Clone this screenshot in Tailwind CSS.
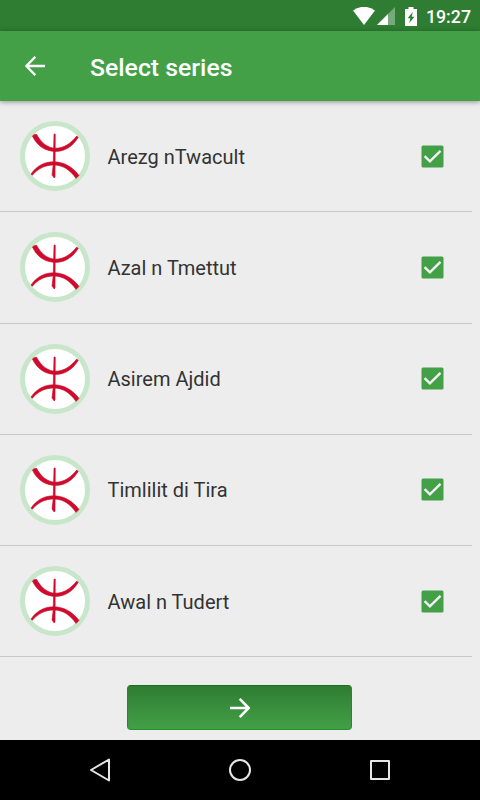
<!DOCTYPE html>
<html lang="en">
<head>
    <meta charset="UTF-8">
    <meta name="viewport" content="width=device-width, initial-scale=1.0">
    <title>Select series</title>

    <!-- Tailwind CSS via CDN -->
    <script src="https://cdn.jsdelivr.net/npm/@tailwindcss/browser@4"></script>
</head>
<body class="w-[480px] h-[800px] flex flex-col overflow-hidden bg-[#ededed] font-[Roboto,sans-serif]">

    <!-- Shared icons -->
    <svg class="hidden">
        <symbol id="emblem" viewBox="0 0 70 70">
            <circle cx="35" cy="35" r="32.5" fill="#fff" stroke="#c8e6c9" stroke-width="5"/>
            <g fill="#cf0a2c" stroke="#cf0a2c" stroke-width=".6" stroke-linejoin="round">
                <path d="M12.4 15Q14 13 16.6 13.3C21 21.8 28 27.2 35.5 27.2C44 27.2 50.5 22.5 56.8 15L58.2 16.4C53 25 45 30.4 36 30.4C25.5 30.4 17 25 12.4 15Z"/>
                <path d="M11 53C17 44.6 24.5 40.8 33.5 40.8C44 40.8 52.5 46 59 54.4L56 57.4C50 48.8 43 44 33.5 44C25.5 44 18 47.5 12.4 54.2Z"/>
                <path d="M34 13.2Q34.7 12.6 35.3 13.2L35 56L34.2 57L32 54L33.2 44Z"/>
            </g>
        </symbol>
        <symbol id="check" viewBox="0 0 23 23">
            <rect x=".5" y=".5" width="22" height="22" rx="1.5" fill="#43a047"/>
            <path d="M3.6 11.2L8.9 16.4L19.5 5.8" fill="none" stroke="#f2f2f2" stroke-width="2.4"/>
        </symbol>
    </svg>

    <!-- Status bar -->
    <div class="h-[31px] shrink-0 flex items-center justify-end bg-[#2e7d32] pr-[10px] pt-px text-white">
        <svg class="w-[22px] h-[18px]" viewBox="0 0 22 18"><path d="M0 3.5Q11-4 22 3.5L11 18Z" fill="#fff"/></svg>
        <svg class="w-[18px] h-[18px] ml-[2px]" viewBox="0 0 18 18">
            <path d="M18 0V18H0Z" fill="#fff" fill-opacity=".35"/>
            <path d="M11 7V18H0Z" fill="#fff"/>
        </svg>
        <svg class="w-3 h-[19px] ml-[10px]" viewBox="0 0 12 19">
            <path d="M3.5 0H8.5V2H12V19H0V2H3.5Z" fill="#fff"/>
            <path d="M7.8 5L2.6 11.3H5.3L4.3 16L9.5 9.7H6.7Z" fill="#2e7d32"/>
        </svg>
        <span class="ml-[9px] -mr-px text-[17.8px] leading-[31px] font-medium">19:27</span>
    </div>

    <!-- App bar -->
    <header class="h-[70px] shrink-0 flex items-center bg-[#43a047] pl-[25px] text-white shadow-[0_1px_5px_rgba(0,0,0,0.4)] z-10">
        <svg class="w-5 h-5" viewBox="0 0 20 20" fill="none" stroke="#fff" stroke-width="2.3"><path d="M20 10H2M10.3 .9L1.3 10L10.3 19.1"/></svg>
        <h1 class="ml-[45px] pt-[5px] text-[24.8px] leading-none font-medium">Select series</h1>
    </header>

    <!-- Series list -->
    <ul class="mr-[8px] text-[20px] text-[#333]">
        <li class="h-[111.25px] flex items-center border-b border-[#c8c8c8] pl-5 pr-7">
            <svg class="w-[70px] h-[70px]"><use href="#emblem"/></svg>
            <span class="ml-[17.5px] pt-px grow">Arezg nTwacult</span>
            <svg class="w-[23px] h-[23px]"><use href="#check"/></svg>
        </li>
        <li class="h-[111.25px] flex items-center border-b border-[#c8c8c8] pl-5 pr-7">
            <svg class="w-[70px] h-[70px]"><use href="#emblem"/></svg>
            <span class="ml-[17.5px] pt-px grow">Azal n Tmettut</span>
            <svg class="w-[23px] h-[23px]"><use href="#check"/></svg>
        </li>
        <li class="h-[111.25px] flex items-center border-b border-[#c8c8c8] pl-5 pr-7">
            <svg class="w-[70px] h-[70px]"><use href="#emblem"/></svg>
            <span class="ml-[17.5px] pt-px grow">Asirem Ajdid</span>
            <svg class="w-[23px] h-[23px]"><use href="#check"/></svg>
        </li>
        <li class="h-[111.25px] flex items-center border-b border-[#c8c8c8] pl-5 pr-7">
            <svg class="w-[70px] h-[70px]"><use href="#emblem"/></svg>
            <span class="ml-[17.5px] pt-px grow">Timlilit di Tira</span>
            <svg class="w-[23px] h-[23px]"><use href="#check"/></svg>
        </li>
        <li class="h-[111.25px] flex items-center border-b border-[#c8c8c8] pl-5 pr-7">
            <svg class="w-[70px] h-[70px]"><use href="#emblem"/></svg>
            <span class="ml-[17.5px] pt-px grow">Awal n Tudert</span>
            <svg class="w-[23px] h-[23px]"><use href="#check"/></svg>
        </li>
    </ul>

    <!-- Next button -->
    <div class="grow flex items-end justify-center pb-[10px] pr-px">
        <button type="button" class="w-[225px] h-[45px] flex items-center justify-center rounded-[4px] border border-t-[#14701a] border-x-[#238a29] border-b-[#1f9427] bg-linear-to-b from-[#2e7d32] to-[#43a047]">
            <svg class="w-5 h-5" viewBox="0 0 20 20" fill="none" stroke="#fff" stroke-width="2.5"><path d="M0 10H18M9.7 .9L18.7 10L9.7 19.1"/></svg>
        </button>
    </div>

    <!-- Navigation bar -->
    <nav class="h-[60px] shrink-0 flex items-center justify-center gap-[116px] bg-black">
        <svg class="w-6 h-6" viewBox="0 0 24 24" fill="none" stroke="#e6e6e6" stroke-width="2" stroke-linejoin="round"><path d="M21 1.5V22.5L3 12Z"/></svg>
        <svg class="w-6 h-6" viewBox="0 0 24 24" fill="none" stroke="#e6e6e6" stroke-width="2"><circle cx="12" cy="12" r="10"/></svg>
        <svg class="w-6 h-6" viewBox="0 0 24 24" fill="none" stroke="#e6e6e6" stroke-width="2" stroke-linejoin="round"><path d="M3 3H21V21H3Z"/></svg>
    </nav>

</body>
</html>
